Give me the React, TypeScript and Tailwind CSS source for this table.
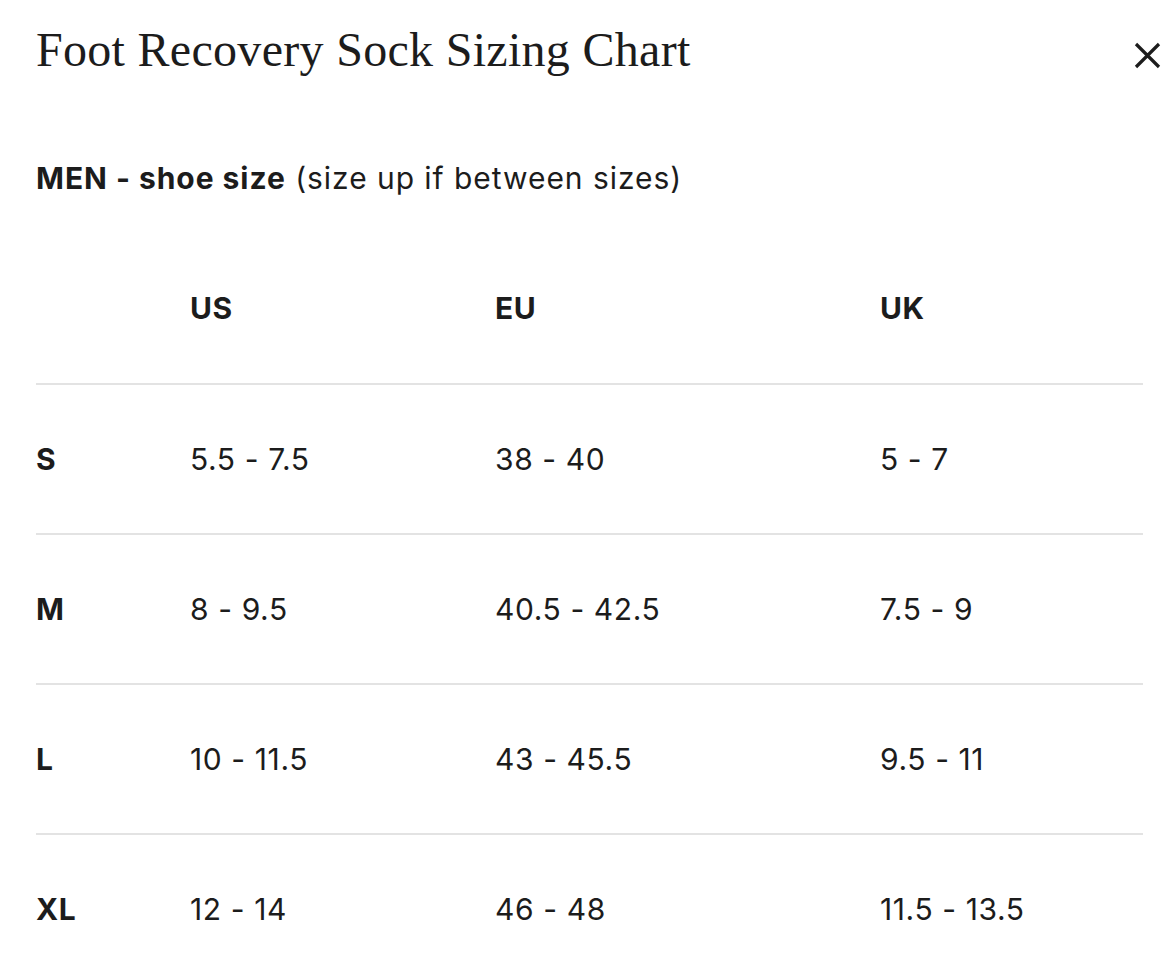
const rows = [
  { size: "S", us: "5.5 - 7.5", eu: "38 - 40", uk: "5 - 7" },
  { size: "M", us: "8 - 9.5", eu: "40.5 - 42.5", uk: "7.5 - 9" },
  { size: "L", us: "10 - 11.5", eu: "43 - 45.5", uk: "9.5 - 11" },
  { size: "XL", us: "12 - 14", eu: "46 - 48", uk: "11.5 - 13.5" },
];

const cols = "grid grid-cols-[154px_305px_385px_1fr] items-center";

export default function App() {
  return (
    <div className="min-h-screen bg-white text-[#1c1c1c] font-['Inter',sans-serif]">
      <div className="pl-[36px] pr-[34px]">
        <div className="flex items-start justify-between pt-[22px]">
          <h2 className="font-['Liberation_Serif',serif] text-[48px] leading-[56px] tracking-[0.3px]">
            Foot Recovery Sock Sizing Chart
          </h2>
          <button className="mt-[20px] mr-[-19px] text-[#1c1c1c]">
            <svg width="27" height="27" viewBox="0 0 27 27" fill="none">
              <path d="M2 2L25 25M25 2L2 25" stroke="currentColor" strokeWidth="3.2" />
            </svg>
          </button>
        </div>

        <p className="mt-[82px] text-[30px] leading-[36px] tracking-[0.95px]">
          <span className="font-bold">MEN - shoe size</span> (size up if between sizes)
        </p>

        <div className="mt-[37px] mr-[-1px]">
          <div className={`${cols} h-[150px] text-[30px] tracking-[0.6px] font-bold`}>
            <span />
            <span>US</span>
            <span>EU</span>
            <span>UK</span>
          </div>
          {rows.map((row) => (
            <div
              key={row.size}
              className={`${cols} h-[150px] border-t-2 border-[#e3e3e3] text-[30px] tracking-[0.6px]`}
            >
              <span className="font-bold">{row.size}</span>
              <span>{row.us}</span>
              <span>{row.eu}</span>
              <span>{row.uk}</span>
            </div>
          ))}
        </div>
      </div>
    </div>
  );
}
